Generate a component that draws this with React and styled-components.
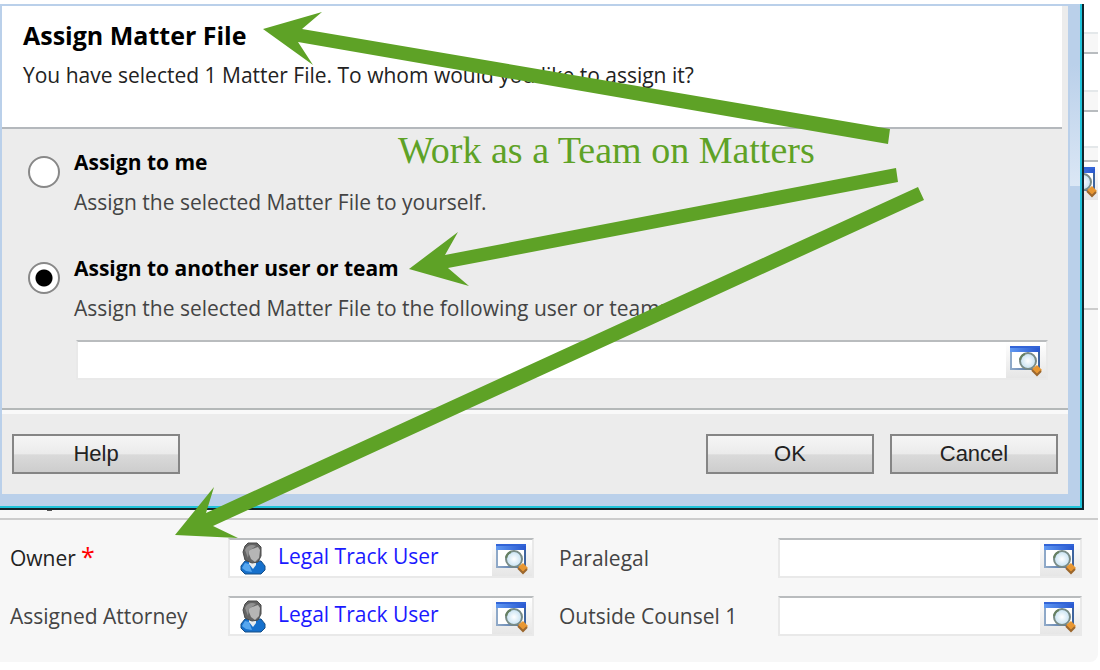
import React, { useState } from 'react';
import styled, { createGlobalStyle } from 'styled-components';

const GlobalStyle = createGlobalStyle`
  * {
    box-sizing: border-box;
  }

  body {
    margin: 0;
    background: #fff;
    font-family: 'Open Sans', 'Segoe UI', sans-serif;
    font-size: 21px;
    line-height: 28px;
    color: #444;
  }
`;

const Page = styled.main`
  position: relative;
  padding: 4px 2px 0 0;
  overflow: hidden;
`;

const Top = styled.div`
  display: flex;
  background: #f7f7f7;
`;

const Dialog = styled.section`
  flex: 1;
  border: 2px solid #12242c;
  border-width: 0 2px 2px 0;
`;

const Glow = styled.div`
  border: 2px solid #1fc3da;
  border-width: 0 2px 2px 0;
`;

const Frame = styled.div`
  padding: 2px 12px 12px 2px;
  background:
    linear-gradient(#bad0ea, #dbe7f5) right 0 top 60px / 10px 122px no-repeat,
    #bad0ea;
`;

const DialogBody = styled.div`
  background: #ececec;
`;

const Header = styled.header`
  margin-right: 6px;
  height: 123px;
  padding: 11px 21px;
  background: #fff;
  border-bottom: 2px solid #b4b8bc;
  color: #222;
`;

const Title = styled.h1`
  margin: 0 0 8px;
  font-size: 25px;
  line-height: 36px;
  color: #000;
`;

const Text = styled.p`
  margin: 0;
`;

const Options = styled.div`
  padding: 19px 20px 28px 26px;
`;

const Option = styled.div`
  display: flex;
  align-items: flex-start;
  gap: 14px;
  margin-bottom: 38px;
`;

const Radio = styled.input`
  appearance: none;
  flex: none;
  width: 32px;
  height: 32px;
  margin: 8px 0 0;
  border: 2px solid #888;
  border-radius: 50%;
  background: #fff;

  &:checked {
    background: radial-gradient(circle, #000 8px, #fff 9px);
  }
`;

const OptionText = styled.div`
  flex: 1;
`;

const OptionLabel = styled.label`
  display: block;
  margin-bottom: 12px;
  font-weight: bold;
  color: #000;
`;

const Field = styled.div`
  display: flex;
  height: 40px;
  border: 2px solid #e9e9e9;
  border-top-color: #b9bcbe;
  background: #fff;
`;

const OptionField = styled(Field)`
  margin-left: 48px;
  margin-top: -20px;
`;

const FieldInput = styled.input`
  flex: 1;
  min-width: 0;
  border: 0;
  padding: 0 8px;
  background: transparent;
  font: inherit;
`;

const LookupButton = styled.button`
  flex: none;
  width: 40px;
  padding: 2px 0 0 3px;
  border: 0;
  background: linear-gradient(#fff, #e6e6e6);
  line-height: 0;
  text-align: left;
`;

const Footer = styled.footer`
  display: flex;
  gap: 16px;
  padding: 24px 10px 20px;
  border-top: 2px solid #b4b8b8;
  box-shadow: inset 0 4px #f9f9f9;
`;

const Button = styled.button`
  width: 168px;
  height: 40px;
  padding: 0;
  border: 2px solid #858585;
  background: linear-gradient(#f5f5f5, #ebebeb 50%, #dadada 52%, #cdcdcd);
  font-family: 'Liberation Sans', Arial, sans-serif;
  font-size: 22px;
  color: #222;

  &:first-child {
    margin-right: auto;
  }
`;

const Behind = styled.div`
  width: 14px;
  overflow: hidden;
`;

const Strip = styled.div`
  height: ${props => props.$height}px;
  border-bottom: 2px solid ${props => props.$line};
  background: ${props => props.$fill || '#fff'};
`;

const BehindLookup = styled.div`
  height: 38px;
  padding-top: 4px;
  display: flex;
  justify-content: flex-end;
  background: linear-gradient(#fff, #e6e6e6);

  svg {
    flex: none;
  }
`;

const Form = styled.form`
  padding-bottom: 26px;
  border-radius: 0 0 8px 0;
  background: #f7f7f7;
`;

const SectionEdge = styled.div`
  height: 10px;
  padding-left: 47px;
  border-bottom: 2px solid #ccc;

  &::before {
    content: '';
    display: block;
    width: 5px;
    height: 1px;
    background: #555;
  }
`;

const Fields = styled.div`
  display: grid;
  grid-template-columns: minmax(0, 218fr) minmax(0, 306fr) minmax(0, 244fr) minmax(0, 304fr);
  row-gap: 18px;
  padding: 18px 16px 0 10px;
`;

const Label = styled.label`
  padding: 6px 0 0 ${props => (props.$second ? 25 : 0)}px;
  color: ${props => (props.$required ? '#222' : '#444')};
`;

const Required = styled.span`
  color: #f00;
  margin-left: 5px;
  font-size: 25px;
  line-height: 20px;
`;

const UserValue = styled.div`
  flex: 1;
  display: flex;
  gap: 12px;
  padding: 2px 0 0 10px;
`;

const UserLink = styled.a`
  color: #1a1aff;
  text-decoration: none;
`;

const Notes = styled.div`
  position: absolute;
  top: 0;
  left: 0;
  pointer-events: none;
  color: #5ea226;
`;

const Arrows = styled.svg`
  display: block;
`;

const NoteText = styled.span`
  position: absolute;
  top: 130px;
  left: 398px;
  font-family: 'Liberation Serif', 'Times New Roman', serif;
  font-size: 38px;
  line-height: 40px;
  white-space: nowrap;
`;

const LookupIcon = () => (
  <svg width="34" height="32" viewBox="0 0 34 32" aria-hidden="true">
    <defs>
      <linearGradient id="bar" x1="0" x2="1">
        <stop offset="0" stopColor="#5f98f2" />
        <stop offset="1" stopColor="#2857cf" />
      </linearGradient>
      <linearGradient id="pane" x1="0" x2="1">
        <stop offset="0" stopColor="#8fa9c8" />
        <stop offset="1" stopColor="#3e649e" />
      </linearGradient>
      <radialGradient id="glass">
        <stop offset="0" stopColor="#fff" />
        <stop offset="1" stopColor="#c5e1f2" />
      </radialGradient>
    </defs>
    <rect x="2" y="3" width="28" height="21" fill="#fff" stroke="url(#pane)" strokeWidth="2" />
    <rect x="1" y="1" width="30" height="6" fill="url(#bar)" />
    <path d="M1 2h30" stroke="#3264d7" strokeWidth="2" />
    <circle cx="19" cy="16" r="8" fill="url(#glass)" stroke="#798b86" strokeWidth="2" />
    <path d="M11 15a8 8 0 0 1 5-6" fill="none" stroke="#668062" strokeWidth="2" />
    <path d="M23 24l5-4 5 5-5 5z" fill="#e89732" />
    <path d="M23 25l5 5 4-4" fill="none" stroke="#9c672d" strokeWidth="2" />
  </svg>
);

const UserIcon = () => (
  <svg width="26" height="34" viewBox="0 0 26 34" aria-hidden="true">
    <path d="M5 19h16l4 5v4l-4 4H5l-4-4v-4z" fill="#1670cc" stroke="#174e85" />
    <path d="M5 21l4 1 3 8-6-1-4-3z" fill="#57a7ef" />
    <path d="M9 18h7v5l-3 4-4-5z" fill="#e8edf0" />
    <path d="M8 1h9l4 4v9l-3 6-6 1-7-3-2-8 2-6z" fill="#646464" stroke="#494949" />
    <path d="M9 8l9-3 2 3-1 8-4 4-4-3-2-5z" fill="#b5b5b5" />
    <path d="M5 8c2-5 7-6 11-4l-7 5-1 7z" fill="#929292" />
  </svg>
);

const Lookup = ({ name, id, user }) => (
  <Field>
    {user ? (
      <UserValue>
        <UserIcon />
        <UserLink id={id} href="#user">{user}</UserLink>
      </UserValue>
    ) : (
      <FieldInput id={id} type="text" />
    )}
    <LookupButton type="button" aria-label={`Look up ${name}`}>
      <LookupIcon />
    </LookupButton>
  </Field>
);

const fields = [
  { id: 'owner', name: 'Owner', user: 'Legal Track User', required: true },
  { id: 'paralegal', name: 'Paralegal', second: true },
  { id: 'attorney', name: 'Assigned Attorney', user: 'Legal Track User' },
  { id: 'counsel', name: 'Outside Counsel 1', second: true },
];

const App = () => {
  const [target, setTarget] = useState('other');

  return (
    <>
      <GlobalStyle />
      <Page>
        <Top>
          <Dialog role="dialog" aria-labelledby="dialog-title">
            <Glow>
              <Frame>
                <DialogBody>
                  <Header>
                    <Title id="dialog-title">Assign Matter File</Title>
                    <Text>You have selected 1 Matter File. To whom would you like to assign it?</Text>
                  </Header>
                  <Options>
                    <Option>
                      <Radio
                        type="radio"
                        name="target"
                        id="me"
                        checked={target === 'me'}
                        onChange={() => setTarget('me')}
                      />
                      <OptionText>
                        <OptionLabel htmlFor="me">Assign to me</OptionLabel>
                        <Text>Assign the selected Matter File to yourself.</Text>
                      </OptionText>
                    </Option>
                    <Option>
                      <Radio
                        type="radio"
                        name="target"
                        id="other"
                        checked={target === 'other'}
                        onChange={() => setTarget('other')}
                      />
                      <OptionText>
                        <OptionLabel htmlFor="other">Assign to another user or team</OptionLabel>
                        <Text>Assign the selected Matter File to the following user or team:</Text>
                      </OptionText>
                    </Option>
                    <OptionField>
                      <FieldInput type="text" aria-label="User or team" />
                      <LookupButton type="button" aria-label="Look up user or team">
                        <LookupIcon />
                      </LookupButton>
                    </OptionField>
                  </Options>
                  <Footer>
                    <Button type="button">Help</Button>
                    <Button type="button">OK</Button>
                    <Button type="button">Cancel</Button>
                  </Footer>
                </DialogBody>
              </Frame>
            </Glow>
          </Dialog>
          <Behind>
            <Strip $height={30} $line="#e4e8ea" />
            <Strip $height={20} $line="#b8bcbf" $fill="#f7f7f7" />
            <Strip $height={38} $line="#e4e8ea" />
            <Strip $height={20} $line="#b8bcbf" $fill="#f7f7f7" />
            <Strip $height={36} $line="#e4e8ea" />
            <Strip $height={14} $line="#b8bcbf" $fill="#f7f7f7" />
            <BehindLookup>
              <LookupIcon />
            </BehindLookup>
            <Strip $height={110} $line="#ccc" $fill="#f7f7f7" />
          </Behind>
        </Top>
        <Form>
          <SectionEdge />
          <Fields>
            {fields.map((field) => (
              <React.Fragment key={field.id}>
                <Label htmlFor={field.id} $second={field.second} $required={field.required}>
                  {field.name}
                  {field.required && <Required>*</Required>}
                </Label>
                <Lookup name={field.name} id={field.id} user={field.user} />
              </React.Fragment>
            ))}
          </Fields>
        </Form>
        <Notes>
          <Arrows width="1100" height="670" viewBox="0 0 1100 670" fill="currentColor">
            <path d="M263 29L322 12L302 29L890 129L888 144L298 42L313 65Z" />
            <path d="M409 269L458 232L445 255L896 168L898 182L448 268L469 286Z" />
            <path d="M175 535L214 487L206 513L918 187L924 200L213 526L238 538Z" />
          </Arrows>
          <NoteText>Work as a Team on Matters</NoteText>
        </Notes>
      </Page>
    </>
  );
};

export default App;
